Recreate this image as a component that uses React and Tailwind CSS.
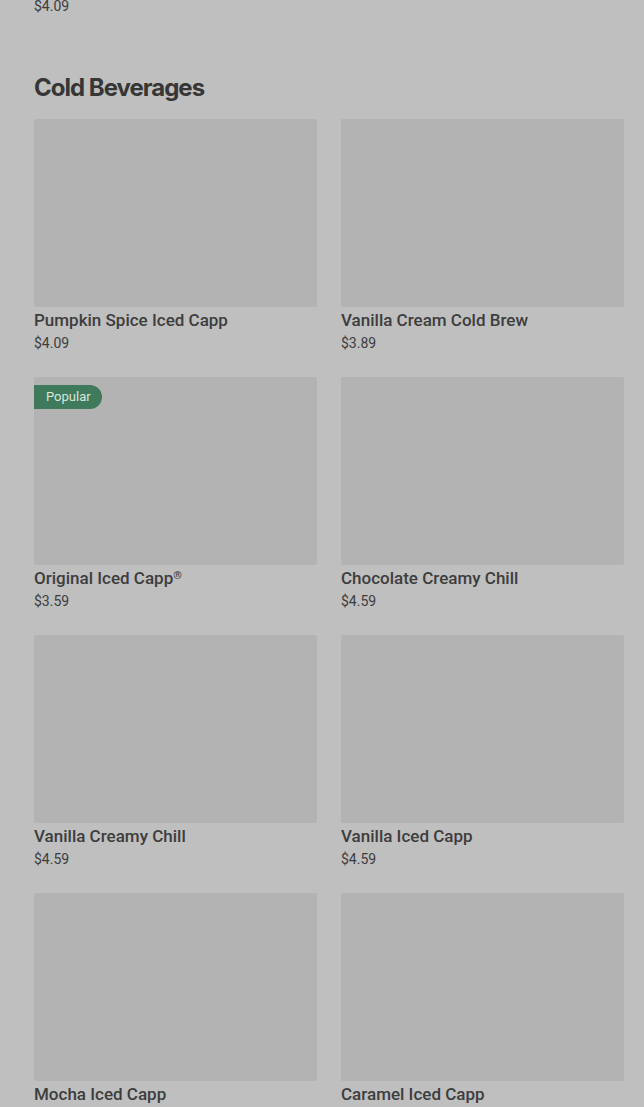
const items = [
  { name: "Pumpkin Spice Iced Capp", price: "$4.09" },
  { name: "Vanilla Cream Cold Brew", price: "$3.89" },
  { name: "Original Iced Capp", mark: "®", price: "$3.59", popular: true },
  { name: "Chocolate Creamy Chill", price: "$4.59" },
  { name: "Vanilla Creamy Chill", price: "$4.59" },
  { name: "Vanilla Iced Capp", price: "$4.59" },
  { name: "Mocha Iced Capp", price: "$4.59" },
  { name: "Caramel Iced Capp", price: "$4.59" },
];

const Card = ({ item }) => {
  return (
    <div className="flex flex-col">
      <div className="relative h-[188px] bg-[#b3b3b3] rounded-[2px]">
        {item.popular && (
          <span className="absolute left-0 top-[8px] h-[24px] w-[68px] flex items-center pl-[12px] bg-[#3f7a5c] text-[#d9e6dc] text-[13px] rounded-r-full">
            Popular
          </span>
        )}
      </div>
      <p className="mt-[2px] text-[17px] leading-[23px] font-medium text-[#3d3d3d]">
        {item.name}
        {item.mark && (
          <span className="relative -top-[5px] text-[11px] leading-none">{item.mark}</span>
        )}
      </p>
      <p className="mt-[1px] text-[14px] leading-[20px] text-[#3d3d3d]">{item.price}</p>
    </div>
  );
};

export default function App() {
  return (
    <div
      className="h-[1107px] overflow-hidden bg-[#bfbfbf] pl-[34px] pr-[20px]"
      style={{ fontFamily: "Roboto, sans-serif" }}
    >
      <p className="-mt-[4px] text-[14px] leading-[20px] text-[#3d3d3d]">$4.09</p>
      <h2
        className="mt-[56px] mb-[15px] text-[24px] leading-[32px] font-bold tracking-[-1px] text-[#363636]"
        style={{ fontFamily: "Inter, sans-serif" }}
      >
        Cold Beverages
      </h2>
      <div className="grid grid-cols-2 gap-x-[24px] gap-y-[24px]">
        {items.map((item) => (
          <Card key={item.name} item={item} />
        ))}
      </div>
    </div>
  );
}
